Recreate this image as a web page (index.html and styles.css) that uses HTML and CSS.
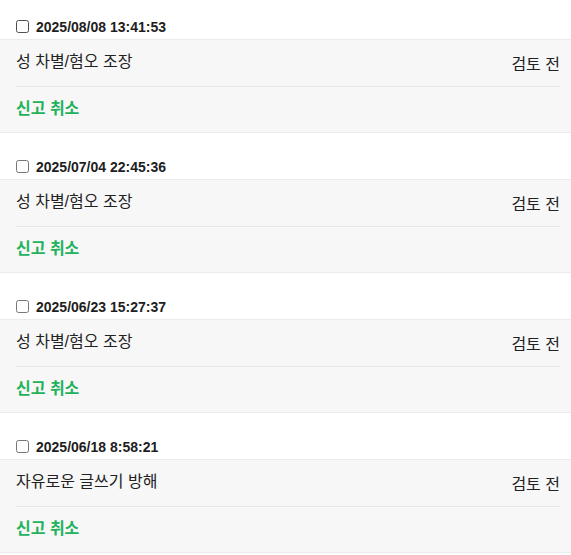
FILE: index.html
```html
<!DOCTYPE html>
<html lang="ko">
<head>
    <meta charset="UTF-8">
    <meta name="viewport" content="width=device-width, initial-scale=1.0">
    <title>신고 내역</title>
    <link rel="stylesheet" href="styles.css">
</head>
<body>
    <ul class="report-list">
        <li class="report">
            <label class="report-head">
                <input type="checkbox" class="report-check">
                <span class="report-date">2025/08/08 13:41:53</span>
            </label>
            <div class="report-body">
                <div class="report-row">
                    <span class="report-reason">성 차별/혐오 조장</span>
                    <span class="report-status">검토 전</span>
                </div>
                <div class="report-actions">
                    <button class="cancel-btn">신고 취소</button>
                </div>
            </div>
        </li>
        <li class="report">
            <label class="report-head">
                <input type="checkbox" class="report-check">
                <span class="report-date">2025/07/04 22:45:36</span>
            </label>
            <div class="report-body">
                <div class="report-row">
                    <span class="report-reason">성 차별/혐오 조장</span>
                    <span class="report-status">검토 전</span>
                </div>
                <div class="report-actions">
                    <button class="cancel-btn">신고 취소</button>
                </div>
            </div>
        </li>
        <li class="report">
            <label class="report-head">
                <input type="checkbox" class="report-check">
                <span class="report-date">2025/06/23 15:27:37</span>
            </label>
            <div class="report-body">
                <div class="report-row">
                    <span class="report-reason">성 차별/혐오 조장</span>
                    <span class="report-status">검토 전</span>
                </div>
                <div class="report-actions">
                    <button class="cancel-btn">신고 취소</button>
                </div>
            </div>
        </li>
        <li class="report">
            <label class="report-head">
                <input type="checkbox" class="report-check">
                <span class="report-date">2025/06/18 8:58:21</span>
            </label>
            <div class="report-body">
                <div class="report-row">
                    <span class="report-reason">자유로운 글쓰기 방해</span>
                    <span class="report-status">검토 전</span>
                </div>
                <div class="report-actions">
                    <button class="cancel-btn">신고 취소</button>
                </div>
            </div>
        </li>
    </ul>
</body>
</html>
```

FILE: styles.css
```css
body {
    margin: 0;
    padding: 0;
    font-family: "Liberation Sans", "Noto Sans CJK KR", sans-serif;
    color: #222;
    background: #fff;
}

.report-list {
    list-style: none;
    margin: 0;
    padding: 0;
}

.report {
    margin-bottom: 7px;
}

/* 체크박스 + 날짜 */
.report-head {
    display: flex;
    align-items: center;
    gap: 7px;
    padding: 20px 16px 6px 16px;
    height: 13px;
}

.report-check {
    margin: 0;
    width: 13px;
    height: 13px;
}

.report-date {
    font-size: 14px;
    font-weight: bold;
    line-height: 14px;
    color: #1e1e1e;
}

.report-body {
    background-color: #f7f7f7;
    border-top: 1px solid #ebebeb;
    border-bottom: 1px solid #ebebeb;
    padding: 0 11px 0 16px;
}

.report-row {
    display: flex;
    justify-content: space-between;
    align-items: flex-start;
    padding: 11px 0 10px;
    border-bottom: 1px solid #e6e6e6;
    font-size: 16px;
    line-height: 22px;
}

.report-status {
    padding-top: 3px;
}

.report-actions {
    padding: 11px 0 12px;
}

.cancel-btn {
    border: none;
    background: none;
    padding: 0;
    font-family: inherit;
    font-size: 16px;
    font-weight: bold;
    line-height: 22px;
    color: #21b25b;
    cursor: pointer;
}
```
